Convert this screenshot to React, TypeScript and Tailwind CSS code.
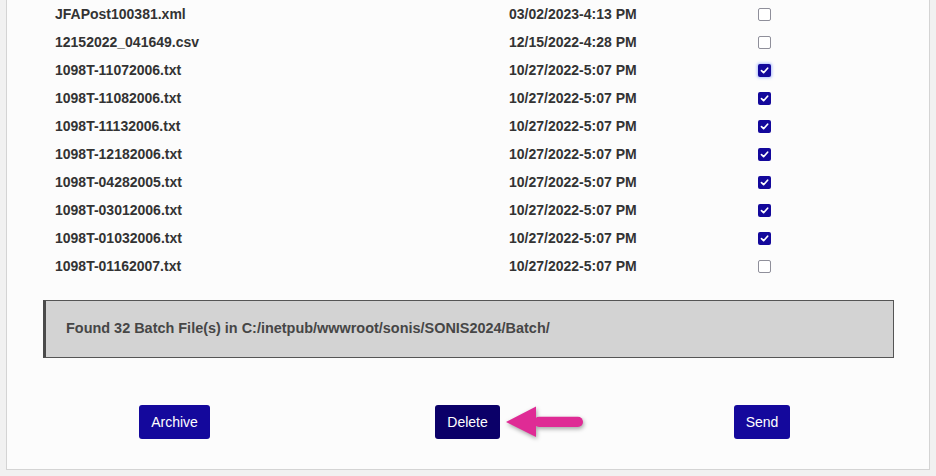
import React from "react";

const rows: [string, string, boolean][] = [
  ["JFAPost100381.xml", "03/02/2023-4:13 PM", false],
  ["12152022_041649.csv", "12/15/2022-4:28 PM", false],
  ["1098T-11072006.txt", "10/27/2022-5:07 PM", true],
  ["1098T-11082006.txt", "10/27/2022-5:07 PM", true],
  ["1098T-11132006.txt", "10/27/2022-5:07 PM", true],
  ["1098T-12182006.txt", "10/27/2022-5:07 PM", true],
  ["1098T-04282005.txt", "10/27/2022-5:07 PM", true],
  ["1098T-03012006.txt", "10/27/2022-5:07 PM", true],
  ["1098T-01032006.txt", "10/27/2022-5:07 PM", true],
  ["1098T-01162007.txt", "10/27/2022-5:07 PM", false],
];

function Check({ checked, focus }: { checked: boolean; focus?: boolean }) {
  if (!checked) {
    return <span className="block w-[13px] h-[13px] rounded-[2px] border border-[#8f8f9a] bg-white" />;
  }
  return (
    <span
      className={`flex items-center justify-center w-[13px] h-[13px] rounded-[2px] bg-[#13089b] ${
        focus ? "shadow-[0_0_3px_1px_rgba(110,140,255,0.55)]" : ""
      }`}
    >
      <svg width="9" height="9" viewBox="0 0 9 9">
        <path d="M1.5 4.6 L3.6 6.7 L7.6 2.2" fill="none" stroke="white" strokeWidth="1.7" strokeLinecap="round" strokeLinejoin="round" />
      </svg>
    </span>
  );
}

export default function App() {
  return (
    <div
      className="relative w-[936px] h-[476px] bg-[#f1f1f1] overflow-hidden"
      style={{ fontFamily: '"Liberation Sans", Arial, sans-serif' }}
    >
      <div className="mx-[6px] h-[470px] bg-[#fcfcfc] border-x border-b border-[#d4d4d4] flex flex-col">
        <div className="flex flex-col">
          {rows.map(([name, date, checked], i) => (
            <div key={name} className="flex items-center h-[28px] text-[14px] font-bold text-[#333333]">
              <div className="w-[502px] pl-[48px]">{name}</div>
              <div className="w-[249px]">{date}</div>
              <div className="w-[13px]">
                <Check checked={checked} focus={i === 2} />
              </div>
            </div>
          ))}
        </div>
        <div className="mt-[20px] ml-[36px] w-[851px] h-[58px] bg-[#d3d3d3] border border-[#555555] border-l-[3px] border-l-[#4a4a4a] flex items-center pl-[20px] text-[14.45px] font-bold text-[#464646]">
          Found 32 Batch File(s) in C:/inetpub/wwwroot/sonis/SONIS2024/Batch/
        </div>
        <div className="mt-[47px] ml-[21px] w-[879px] grid grid-cols-3">
          <div className="flex justify-center">
            <button className="h-[34px] px-[12px] rounded-[3px] bg-[#14089c] text-white text-[14px]">Archive</button>
          </div>
          <div className="flex justify-center">
            <button className="h-[34px] px-[12px] rounded-[3px] bg-[#0b0068] text-white text-[14px]">Delete</button>
          </div>
          <div className="flex justify-center pl-[3px]">
            <button className="h-[34px] px-[12px] rounded-[3px] bg-[#14089c] text-white text-[14px]">Send</button>
          </div>
        </div>
      </div>
      <svg
        className="absolute left-[500px] top-[400px]"
        width="92"
        height="46"
        viewBox="0 0 92 46"
        style={{ filter: "drop-shadow(1px 2px 2px rgba(0,0,0,0.35))" }}
      >
        <polygon points="6,22 36,6.5 36,37" fill="#df2b95" />
        <rect x="34" y="16.7" width="49" height="10.3" rx="5.1" fill="#df2b95" />
      </svg>
    </div>
  );
}
